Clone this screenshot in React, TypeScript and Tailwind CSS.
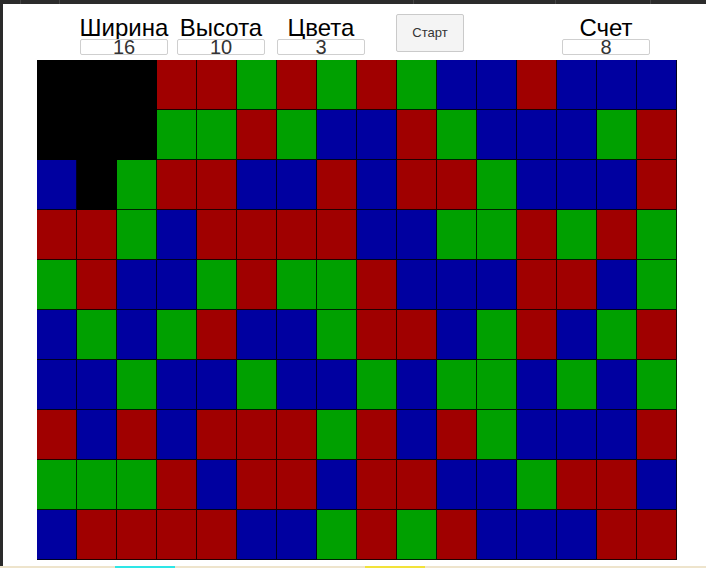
import React from 'react';

const GRID = [
  'KKKRRGRGRGBBRBBB',
  'KKKGGRGBBRGBBBGR',
  'BKGRRBBRBRRGBBBR',
  'RRGBRRRRBBGGRGRG',
  'GRBBGRGGRBBBRRBG',
  'BGBGRBBGRRBGRBGR',
  'BBGBBGBBGBGGBGBG',
  'RBRBRRRGRBRGBBBR',
  'GGGRBRRBRRBBGRRB',
  'BRRRRBBGRGRBBBRR',
];

const cellColor: Record<string, string> = {
  K: 'bg-black',
  R: 'bg-[#a00000]',
  G: 'bg-[#00a000]',
  B: 'bg-[#0000a0]',
};

const Field: React.FC<{ label: string; value: string; className: string }> = ({ label, value, className }) => (
  <div className={`flex flex-col items-center ${className}`}>
    <span className="text-[24px] leading-[22px] text-black whitespace-nowrap">{label}</span>
    <input
      readOnly
      value={value}
      className="w-[88px] h-[16px] border border-[#cfcfcf] rounded-[2px] bg-white text-center text-[20px] leading-[14px] text-[#333] p-0 outline-none"
    />
  </div>
);

export default function App() {
  return (
    <div className="w-[706px] h-[568px] flex flex-col bg-[#262626] overflow-hidden" style={{ fontFamily: '"Liberation Sans", Arial, sans-serif' }}>
      {/* browser chrome strip */}
      <div className="h-[4px] flex bg-[#2b2b2b]">
        <div className="w-[20px]" />
        <div className="w-[39px] border-l border-[#444]" />
        <div className="w-[354px] border-l border-[#444]" />
        <div className="w-[142px] border-l border-[#444]" />
        <div className="w-[95px] border-l border-[#444]" />
        <div className="flex-1 border-l border-[#444]" />
      </div>
      <div className="flex flex-1">
        <div className="w-[3px] bg-[#2a2a2a]" />
        <div className="flex-1 bg-white flex flex-col">
          <div className="h-[56px] flex items-start">
            <Field label="Ширина" value="16" className="ml-[75px] mt-[13px] w-[92px]" />
            <Field label="Высота" value="10" className="ml-[6px] mt-[13px] w-[90px]" />
            <Field label="Цвета" value="3" className="ml-[10px] mt-[13px] w-[90px]" />
            <button className="ml-[30px] mt-[10px] w-[68px] h-[38px] bg-[#f4f4f4] border border-[#cacaca] rounded-[2px] text-[13px] text-[#333]">
              Старт
            </button>
            <Field label="Счет" value="8" className="ml-[97px] mt-[13px] w-[90px]" />
          </div>
          <div className="ml-[34px] grid grid-cols-[repeat(16,40px)] grid-rows-[repeat(10,50px)] w-[640px]">
            {GRID.flatMap((row, r) =>
              row.split('').map((c, i) => (
                <div
                  key={`${r}-${i}`}
                  className={`${cellColor[c]} border-r border-b border-black/80`}
                />
              ))
            )}
          </div>
        </div>
      </div>
      <div className="h-[2px] flex bg-[#eee4cc]">
        <div className="w-[115px]" />
        <div className="w-[60px] bg-[#2ee6e6]" />
        <div className="w-[190px]" />
        <div className="w-[60px] bg-[#f2e23a]" />
      </div>
    </div>
  );
}
